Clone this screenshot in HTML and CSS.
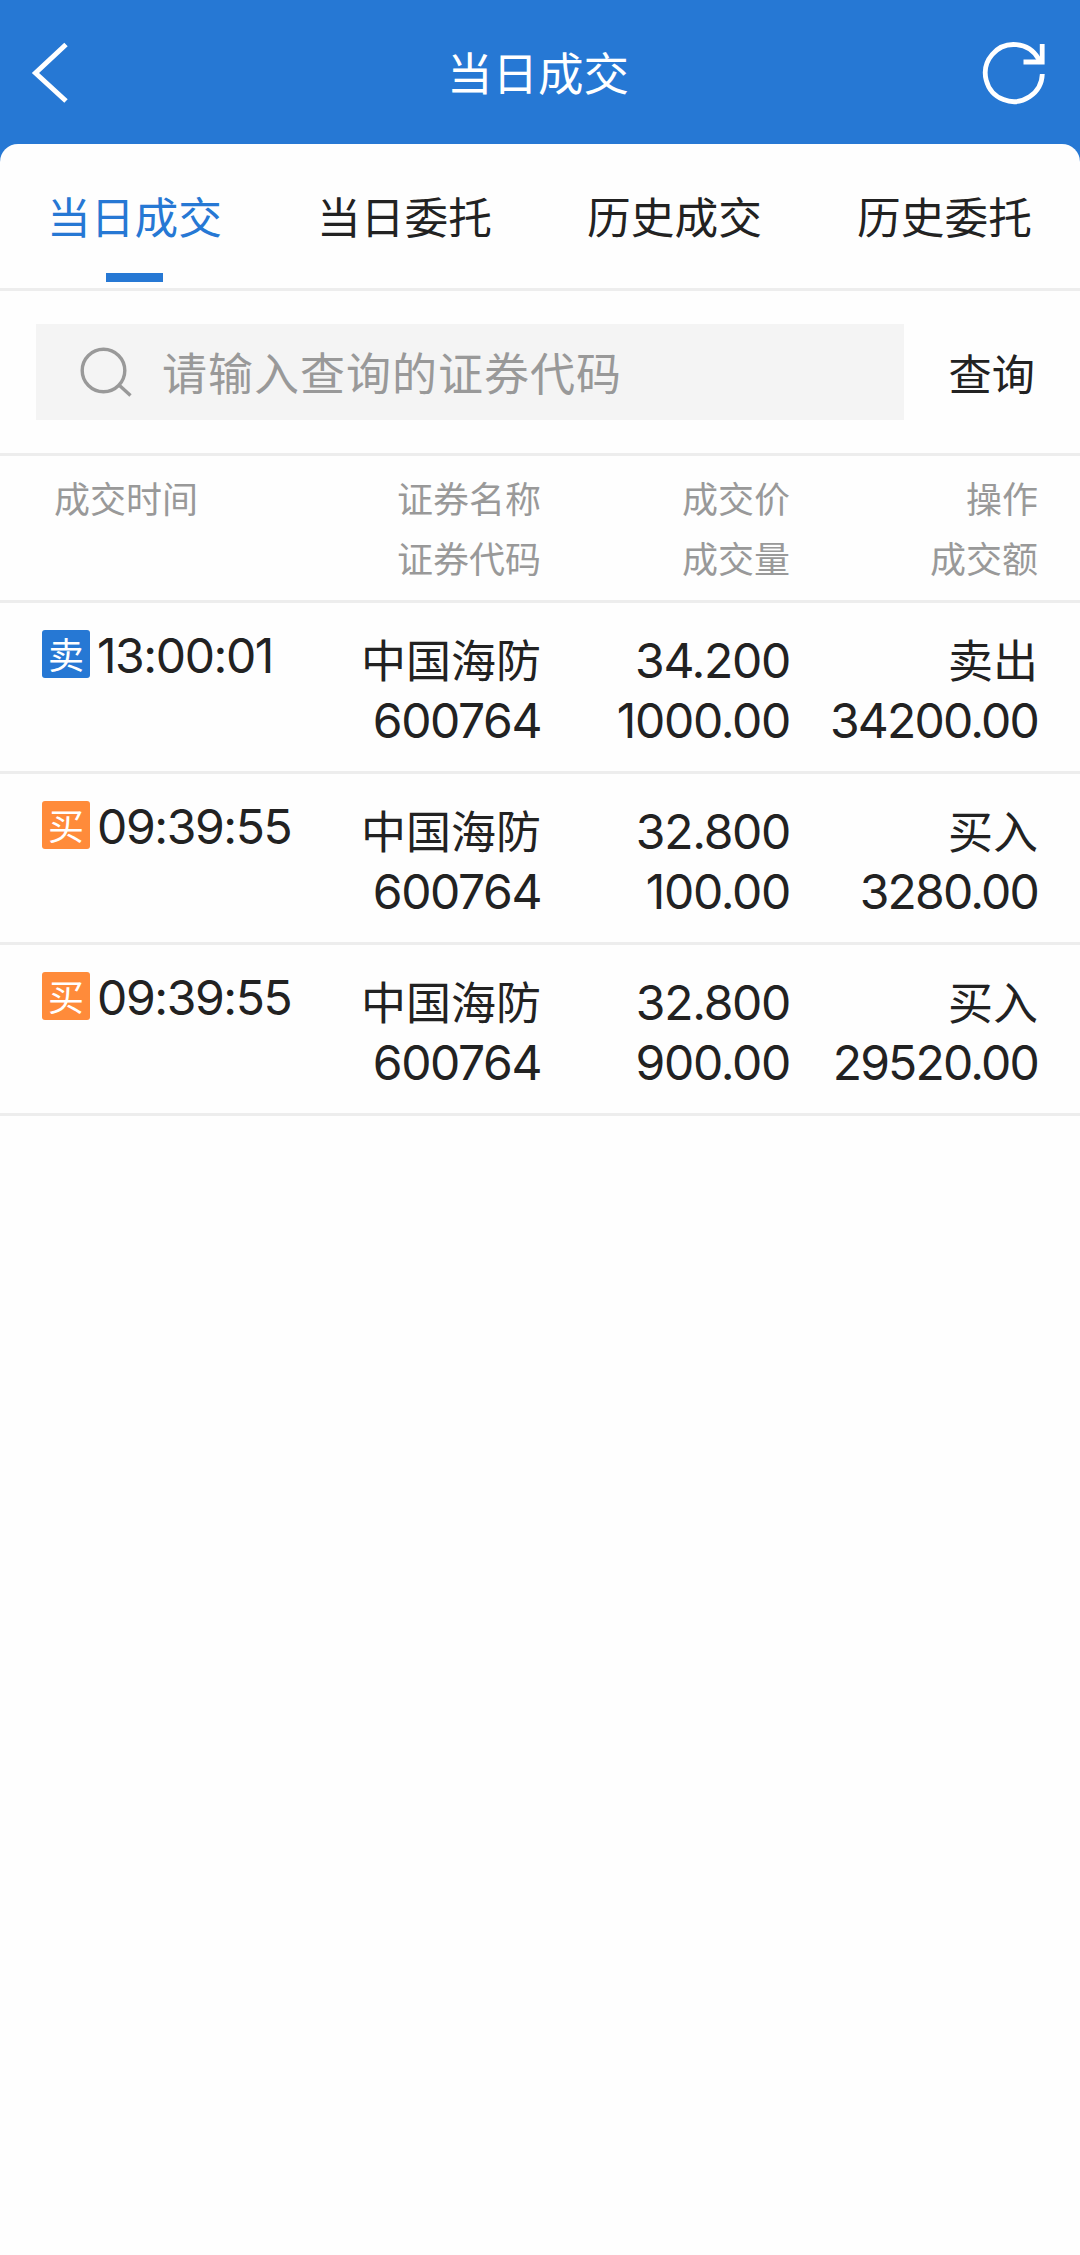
FILE: index.html
```html
<!DOCTYPE html>
<html lang="zh-CN">
<head>
<meta charset="UTF-8">
<meta name="viewport" content="width=device-width, initial-scale=1.0">
<title>当日成交</title>
<link rel="stylesheet" href="styles.css">
</head>
<body>
<header class="header">
  <svg class="icon-back" viewBox="0 0 40 64" fill="none" stroke="#fff" stroke-width="5"><path d="M36 4.5 L5.5 33 L36 61"/></svg>
  <h1>当日成交</h1>
  <svg class="icon-refresh" viewBox="0 0 66 66" fill="none" stroke="#fff" stroke-width="4.8"><path d="M61.3 34 A28.5 28.5 0 1 1 57.5 18.8 L60 23"/><path d="M61.2 4 V22 H42.5"/></svg>
</header>

<main class="panel">
  <nav class="tabs">
    <a class="tab active">当日成交</a>
    <a class="tab">当日委托</a>
    <a class="tab">历史成交</a>
    <a class="tab">历史委托</a>
  </nav>

  <div class="search">
    <label class="search-box">
      <svg class="icon-search" viewBox="0 0 54 54" fill="none" stroke="#999" stroke-width="3.4"><circle cx="24.5" cy="25.5" r="21.3"/><path d="M40 40 L51.5 50.5"/></svg>
      <input type="text" placeholder="请输入查询的证券代码">
    </label>
    <a class="search-btn">查询</a>
  </div>

  <div class="row row-head">
    <div class="time">成交时间</div>
    <div>证券名称<br>证券代码</div>
    <div>成交价<br>成交量</div>
    <div>操作<br>成交额</div>
  </div>

  <div class="row">
    <div class="time"><span class="badge sell">卖</span><span class="num">13:00:01</span></div>
    <div>中国海防<br><span class="num">600764</span></div>
    <div class="num price">34.200<br>1000.00</div>
    <div>卖出<br><span class="num amount">34200.00</span></div>
  </div>
  <div class="row">
    <div class="time"><span class="badge buy">买</span><span class="num">09:39:55</span></div>
    <div>中国海防<br><span class="num">600764</span></div>
    <div class="num price">32.800<br>100.00</div>
    <div>买入<br><span class="num amount">3280.00</span></div>
  </div>
  <div class="row">
    <div class="time"><span class="badge buy">买</span><span class="num">09:39:55</span></div>
    <div>中国海防<br><span class="num">600764</span></div>
    <div class="num price">32.800<br>900.00</div>
    <div>买入<br><span class="num amount">29520.00</span></div>
  </div>
</main>
</body>
</html>
```
FILE: styles.css
```css
* { box-sizing: border-box; }
body { margin: 0; background: #2678d4; color: #222; font-family: "Noto Sans CJK SC", sans-serif; }

.header { height: 144px; padding: 0 33px 0 30px; display: flex; align-items: center; justify-content: space-between; color: #fff; }
.header h1 { margin: 0; padding-bottom: 2px; font-size: 45.5px; font-weight: 400; line-height: 60px; }
.icon-back { width: 40px; height: 64px; margin-right: 25px; }
.icon-refresh { width: 66px; height: 66px; margin-top: 2px; }

.panel { min-height: 2111px; background: #fefefe; border-radius: 18px 18px 0 0; }

.tabs { display: grid; grid-template-columns: repeat(4, 1fr); height: 147px; border-bottom: 3px solid #ededed; }
.tab { display: flex; flex-direction: column; align-items: center; padding: 41px 1px 0 0; font-size: 43.7px; line-height: 60px; }
.tab.active { color: #2678d4; }
.tab.active::after { content: ""; width: 57px; height: 9px; margin-top: 28px; background: #2678d4; }

.search { display: flex; align-items: center; height: 165px; padding: 0 45px 0 36px; justify-content: space-between; border-bottom: 3px solid #ededed; }
.search-box { display: flex; align-items: center; width: 868px; height: 96px; padding-left: 43px; background: #f4f4f4; }
.icon-search { width: 54px; height: 54px; margin-right: 29px; }
.search-box input { flex: 1; height: 90px; padding: 0 0 2px; border: 0; outline: 0; background: none; font: 45px "Noto Sans CJK SC", sans-serif; letter-spacing: 1px; }
.search-box input::placeholder { color: #999; }
.search-btn { font-size: 43.2px; line-height: 60px; }

.row { display: grid; grid-template-columns: 290px 209px 249px 248px; height: 171px; padding: 26px 42px 0; border-bottom: 3px solid #ededed; font-size: 45px; line-height: 60px; text-align: right; }
.row .time { display: flex; align-items: flex-start; gap: 7px; padding-top: 1px; }
.row-head { height: 147px; padding-top: 11px; color: #999; font-size: 36px; }
.row-head .time { padding: 0 0 0 12px; }

.num { font-family: Inter, "Liberation Sans", sans-serif; font-size: 48px; letter-spacing: -1.4px; }
.price { padding-top: 2px; letter-spacing: -1.3px; }
.amount { letter-spacing: -1.8px; }
.time .num { line-height: 51px; letter-spacing: -1.4px; }
.badge { width: 48px; height: 48px; border-radius: 3px; color: #fff; font-size: 36px; line-height: 46px; text-align: center; }
.sell { background: #2678d4; }
.buy { background: #ff8b3a; }
```
